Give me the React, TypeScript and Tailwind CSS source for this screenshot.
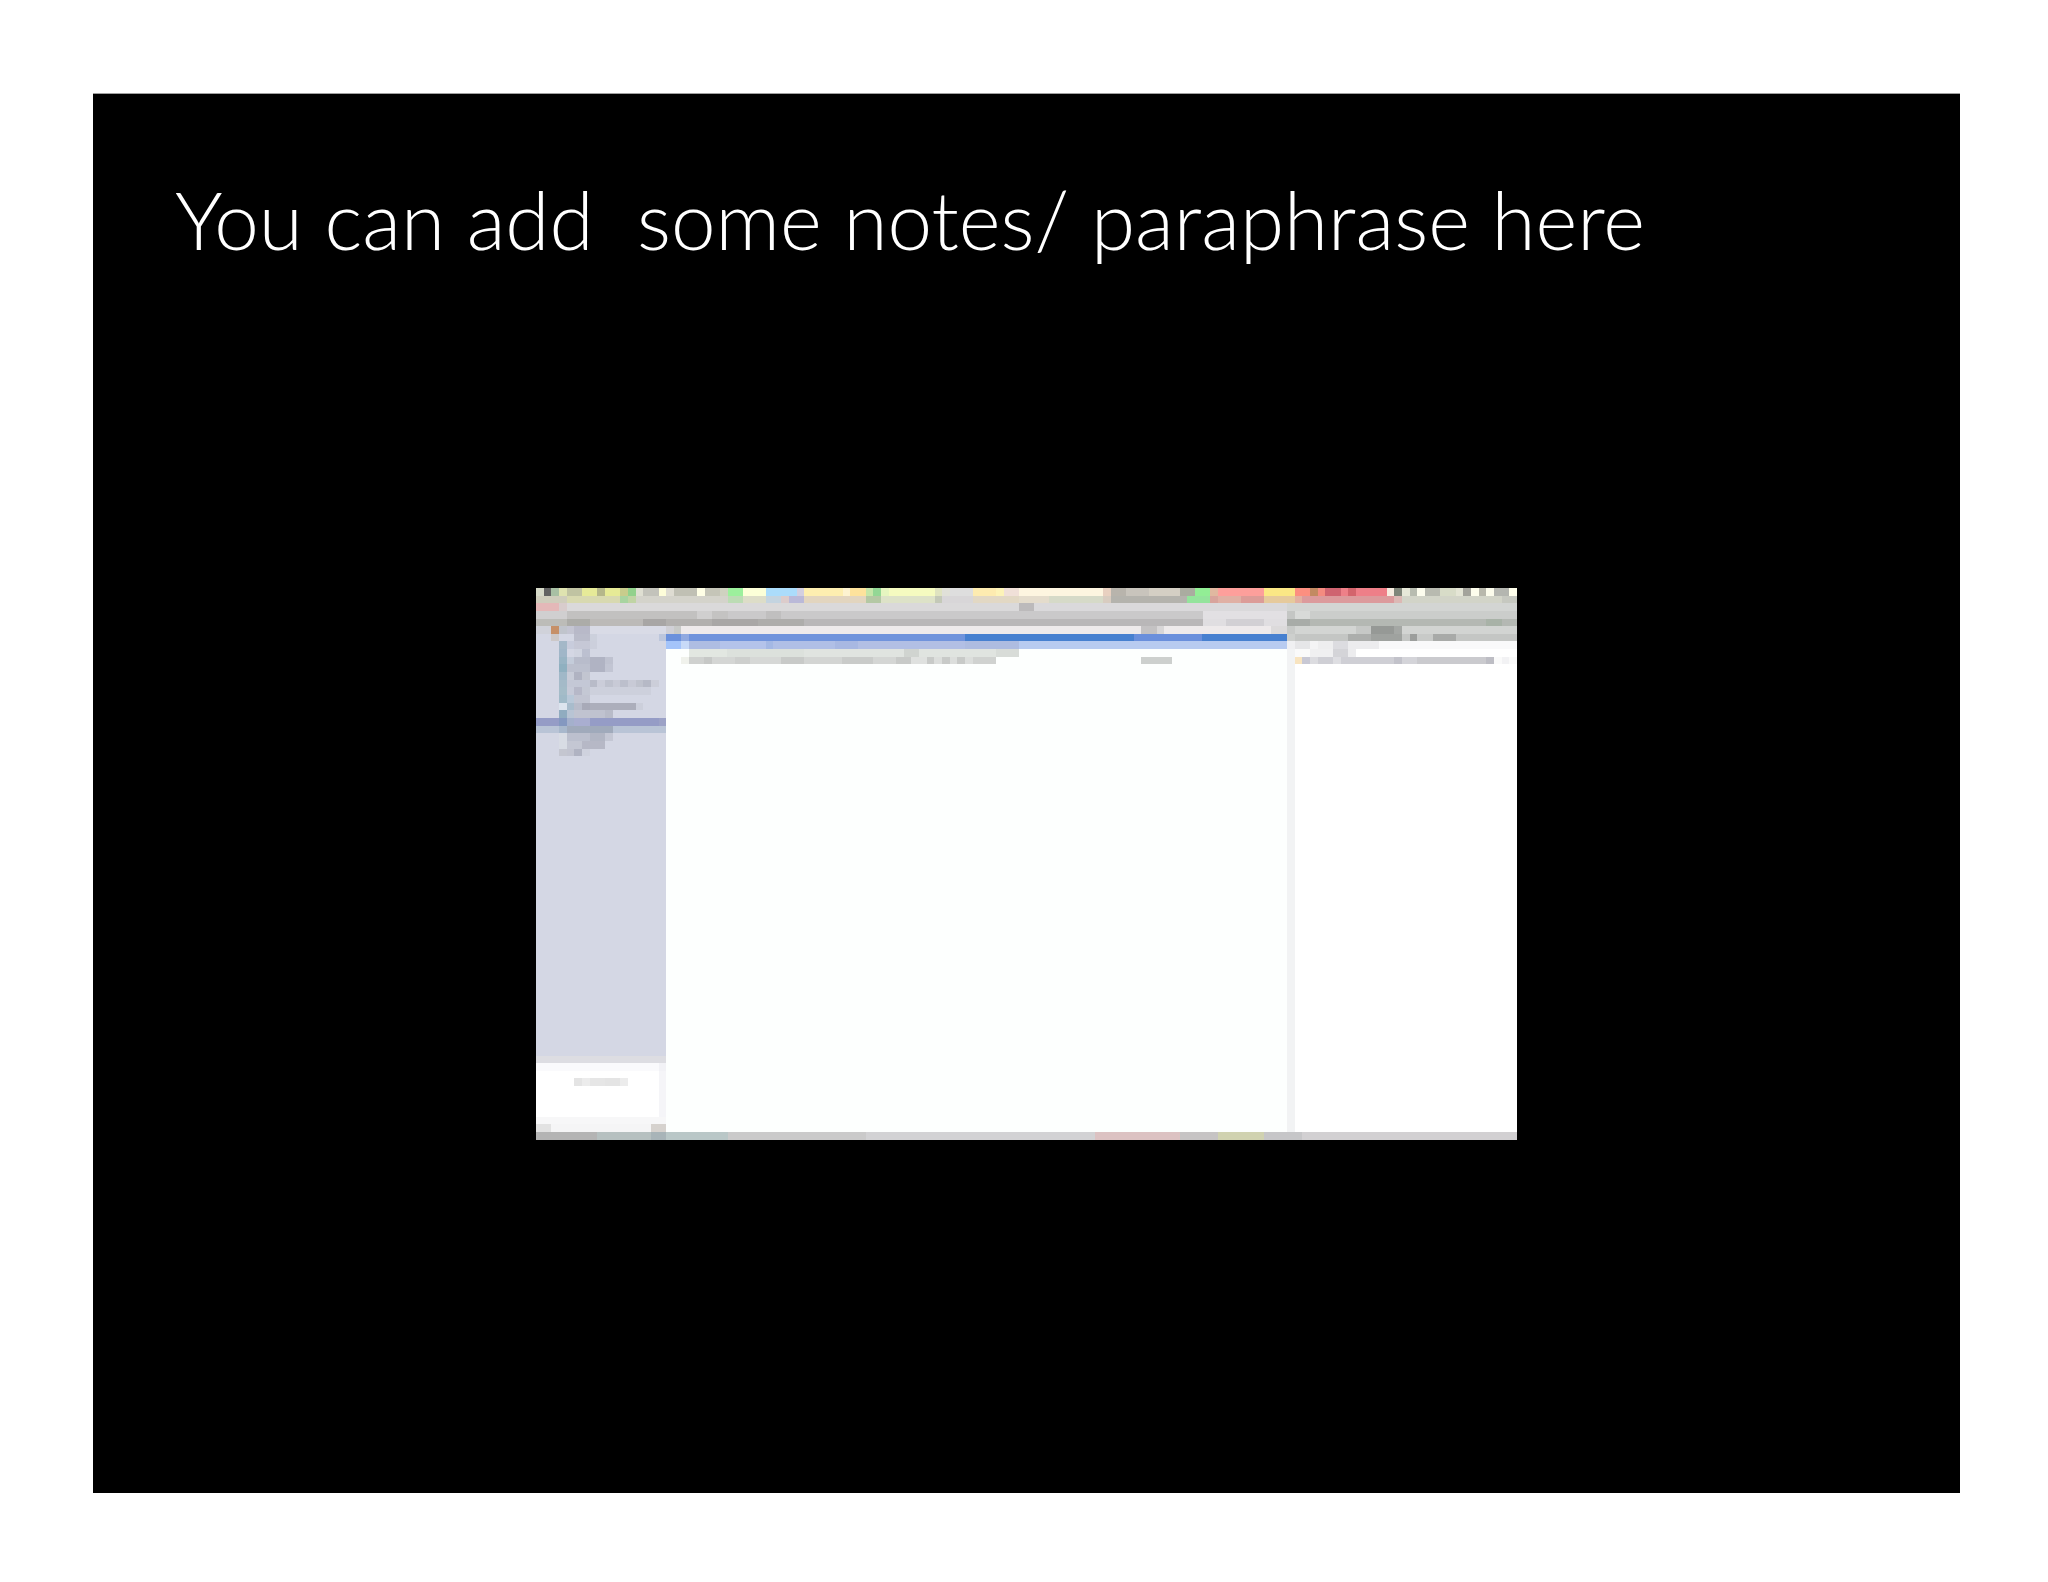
import React from 'react';

// A run is [number of cells, colour]. 'none' leaves the cells empty.
type Run = [number, string];

interface MosaicProps {
  cols: number;
  rows: Run[][];
  height: number;
  className?: string;
}

const Mosaic: React.FC<MosaicProps> = ({ cols, rows, height, className }) => (
  <svg
    viewBox={`0 0 ${cols} ${height}`}
    preserveAspectRatio="none"
    shapeRendering="crispEdges"
    aria-hidden="true"
    className={className ?? 'block h-full w-full'}
  >
    {rows.map((runs, y) => {
      let x = 0;
      return runs.map(([width, color], i) => {
        const start = x;
        x += width;
        return color === 'none' ? null : (
          <rect key={`${y}-${i}`} x={start} y={y} width={width} height={1} fill={color} />
        );
      });
    })}
  </svg>
);

const toolbar: Run[][] = [
  [
    [1, '#d6d9c8'], [1, '#626262'], [1, '#a8c0a4'], [1, '#dfe3b0'], [2, '#c0c3a2'], [2, '#e6ea98'], [1, '#b5b78a'],
    [2, '#e6ea96'], [1, '#c8cc8c'], [1, '#92d18c'], [1, '#dfdfd2'], [2, '#c3c3bb'], [1, '#fdfdd9'], [1, '#dedcd2'],
    [3, '#c0c0b4'], [1, '#ffffe6'], [2, '#c5c5b8'], [1, '#cfd2c0'], [2, '#9cf09c'], [3, '#fcffd8'], [4, '#abdcfb'],
    [1, '#d3cfe0'], [5, '#fdeeb0'], [1, '#fdf3d0'], [2, '#fde29c'], [1, '#c5e6a8'], [1, '#93d795'], [1, '#e6f5c0'],
    [6, '#f5fbc0'], [1, '#dfe3c0'], [1, '#e0e0d8'], [3, '#dedede'], [3, '#fdebb0'], [1, '#fdf3b8'], [2, '#f0e0d8'],
    [11, '#fdf5e0'], [1, '#e8d0c0'], [2, '#b8b4ac'], [3, '#c8c4bc'], [4, '#d4cfc4'], [2, '#aaaca0'], [2, '#92ee95'],
    [1, '#e0b8a0'], [6, '#fd9f9b'], [4, '#fbe785'], [2, '#fc8f80'], [1, '#c28a62'], [1, '#f48b80'], [2, '#cf6470'],
    [1, '#ee8088'], [1, '#d3646c'], [4, '#ee7f88'], [1, '#f6ece0'], [1, '#80867a'], [1, '#e6e8d8'], [1, '#b8bcb0'],
    [1, '#fdfdee'], [2, '#b8bab0'], [2, '#d8dcc8'], [1, '#e4e5d5'], [1, '#a3a39b'], [1, '#fdfdec'], [1, '#b8b8ac'],
    [1, '#fcfcec'], [2, '#b4b6b0'], [1, '#ffffec'],
  ],
  [
    [4, '#cfcdbc'], [7, '#d8d9b0'], [1, '#a8d4a0'], [1, '#c0d4a4'], [12, '#d4d3cb'], [2, '#bcdcb4'], [3, '#ddddc8'],
    [2, '#c4d4e0'], [1, '#dccccb'], [2, '#bab9d8'], [8, '#e2d5bf'], [2, '#b4c8a4'], [7, '#dde2c8'], [1, '#c4c9b8'],
    [4, '#d8d6d8'], [6, '#e2d8c4'], [4, '#e4dccc'], [7, '#d6dac8'], [1, '#d8ccc0'], [10, '#b4b3ad'], [3, '#94e49c'],
    [1, '#d8a49c'], [3, '#e0b0a4'], [3, '#dc9c98'], [4, '#e6ca9c'], [1, '#e4b0a0'], [12, '#dc9a9c'], [1, '#dcb8b4'],
    [13, '#d2d4c8'], [2, '#c6c8c0'], [1, '#d2d4c8'],
  ],
  [[3, '#e4b8b8'], [1, '#d8cccc'], [59, '#dad9da'], [2, '#bcbabb'], [33, '#dad9db'], [30, '#d3d5d3']],
  [
    [4, '#d0cfd0'], [17, '#c2c1c0'], [2, '#d0cfcf'], [2, '#c4c3c2'], [5, '#cac9ca'], [2, '#c0bfbf'], [55, '#cac9ca'],
    [11, '#e2e0e3'], [1, '#c4c6c4'], [2, '#d8dad8'], [27, '#cbcdcb'],
  ],
  [
    [4, '#bcbcb8'], [3, '#acaca8'], [7, '#bcbab8'], [3, '#a8a6a5'], [6, '#b2b0ae'], [6, '#a9a7a6'], [6, '#aeadab'],
    [52, '#b9b7b8'], [3, '#e0dee1'], [5, '#d2d0d4'], [3, '#e0dee1'], [3, '#a8aca8'], [23, '#b4b8b3'], [2, '#a8b2a7'],
    [2, '#b4b8b3'],
  ],
];

const folders: Run[][] = [
  [[2, '#d0d2da'], [1, '#c69068'], [1, '#c0c4cc'], [1, '#c4c5d2'], [2, '#b8b9c8'], [10, '#d9dbe6']],
  [[2, 'none'], [1, '#ccc8c8'], [2, 'none'], [2, '#babcca'], [1, '#ccd0dc'], [8, 'none'], [1, '#bcc6dc']],
  [[3, 'none'], [1, '#a4b8c8'], [1, '#c8ccdc'], [2, '#c6c8d6'], [1, '#cccfdc']],
  [[3, 'none'], [1, '#a0b6c8'], [1, 'none'], [1, '#d0d4e0'], [1, '#bcc0d0']],
  [[3, 'none'], [1, '#98b4c4'], [1, '#c4ccda'], [2, '#b8bccb'], [2, '#b0b3c3'], [1, '#bfc2d0']],
  [[3, 'none'], [1, '#8fb0c0'], [3, '#bcc0ce'], [2, '#b0b3c3'], [1, '#c2c5d3']],
  [[3, 'none'], [1, '#a0b8c8'], [1, '#c8ccd8'], [1, '#b0b3c2'], [1, '#c2c5d0']],
  [
    [3, 'none'], [1, '#a4bac8'], [3, '#c4c8d6'], [1, '#b8bbc8'], [1, '#cbcdd9'], [1, '#bfc2ce'], [1, '#c8cad6'],
    [1, '#bcbfcc'], [1, '#c8cad6'], [1, '#bfc2cd'], [1, '#b6b9c6'], [1, '#ccced9'],
  ],
  [[3, 'none'], [1, '#a4bcc8'], [1, '#c6cad8'], [1, '#b6b8c8'], [1, '#c4c8d4'], [8, '#cdd0dc']],
  [[3, 'none'], [1, '#a0bac8'], [1, '#b8c8d8'], [2, '#c2c5d2']],
  [[3, 'none'], [1, '#dce4ee'], [1, '#a8bccc'], [1, '#b8bcca'], [1, '#a8aab8'], [6, '#acaebb'], [1, '#cccfdb']],
  [[3, 'none'], [1, '#90acc0'], [1, '#b8c4d4'], [2, '#c0c3d0'], [2, '#bfc2cf'], [1, '#b8bbc8']],
  [[3, '#959cc6'], [1, '#8498c0'], [1, '#a4b0cc'], [2, '#a9aed0'], [9, '#959cc6'], [1, '#9ca2c6']],
  [[3, '#b9c4d6'], [1, '#a8b8cc'], [6, '#a0aabb'], [7, '#b9c4d6']],
  [[3, 'none'], [1, '#d8dce4'], [3, '#bcc0ce'], [2, '#b2b6c4'], [1, '#c4c7d4']],
  [[3, 'none'], [1, '#d8dce4'], [2, '#c4c7d3'], [3, '#b6b8c6']],
  [[3, 'none'], [1, '#c4c6d0'], [1, '#c2c4d0'], [1, '#b0b3c2'], [1, '#cfd2de']],
];

const preview: Run[][] = [
  [[16, '#fafafc'], [1, '#f2f2f6']],
  [[16, 'none'], [1, '#f5f5f8']],
  [[5, 'none'], [1, '#e4e4e4'], [1, '#ececec'], [2, '#e6e6e6'], [2, '#e4e4e4'], [1, '#ececec'], [4, 'none'], [1, '#f5f5f8']],
  [[16, 'none'], [1, '#f5f5f8']],
  [[16, 'none'], [1, '#f5f5f8']],
  [[16, 'none'], [1, '#f5f5f8']],
  [[16, 'none'], [1, '#f5f5f8']],
  [[17, '#f7f7f8']],
  [[2, '#e2e2e2'], [13, '#f5f5f6'], [2, '#d6d2ce']],
];

const messages: Run[][] = [
  [[1, '#d0d0d6'], [1, '#c8cac8'], [60, '#eeeaeb'], [2, '#c4c2c3'], [1, '#d8d6d7'], [14, '#eeeaeb'], [2, '#dcdadb']],
  [[2, '#6b91dc'], [1, '#90a9e0'], [36, '#7093dc'], [22, '#4780d0'], [9, '#6a8fdc'], [11, '#4780d0']],
  [
    [2, '#a4c4fa'], [1, '#c8daf8'], [4, '#aebde2'], [6, '#b4c3ea'], [1, '#a4b8e4'], [8, '#b0bfe6'], [3, '#a8b8e2'],
    [14, '#b2bfe4'], [7, '#aebce0'], [35, '#b8cbf0'],
  ],
  [[3, 'none'], [5, '#e2e7e1'], [10, '#dce1dc'], [13, '#e0e4e0'], [2, '#d0d4d0'], [10, '#e0e4e0'], [3, '#d8dcd8']],
  [
    [2, 'none'], [1, '#f0f2ec'], [2, '#cfd1cf'], [1, '#c6c8c6'], [3, '#d4d6d4'], [2, '#cdcfcd'], [4, '#d6d8d6'],
    [3, '#c8cac8'], [5, '#d3d5d3'], [4, '#c9cbc9'], [3, '#d4d6d4'], [2, '#c8cac8'], [2, '#dfe1df'], [1, '#c8cac8'],
    [1, '#dcdedc'], [1, '#c8cac8'], [1, '#dcdedc'], [1, '#c8cac8'], [1, '#dcdedc'], [3, '#d0d2d0'], [19, 'none'],
    [4, '#cdd0ce'],
  ],
];

const details: Run[][] = [
  [[1, '#c8cac8'], [8, '#d3d5d3'], [2, '#c6c8c6'], [3, '#969996'], [1, '#a4a7a4'], [15, '#d2d4d2']],
  [
    [1, '#cdcfcd'], [7, '#c4c6c4'], [3, '#acaeac'], [4, '#9fa29f'], [1, '#c4c6c4'], [1, '#9c9e9c'], [2, '#c8cac8'],
    [3, '#a8aaa8'], [8, '#c4c6c4'],
  ],
  [[1, '#f0f0f2'], [2, '#e6e6e8'], [1, '#f4f4f5'], [2, '#eeeeef'], [2, '#dcdce0'], [4, '#ececee'], [18, '#f9f9fa']],
  [[1, '#f2f3f4'], [2, '#fafafa'], [3, '#f0f0f1'], [2, '#d4d4d8'], [1, '#ececee']],
  [
    [1, '#f2f3f4'], [1, '#f8e4c0'], [1, '#c8c8d4'], [1, '#dcdce0'], [2, '#cfcfd5'], [1, '#dedee2'], [7, '#cfcfd5'],
    [1, '#c2c2ca'], [2, '#d4d4d9'], [9, '#cacace'], [1, '#bdbdc4'], [1, '#fafafa'], [1, '#f2f2f4'], [1, '#fafafa'],
  ],
];

const dock: Run[][] = [
  [
    [8, '#b4b4b4'], [7, '#b6c0c0'], [2, '#a8b4b8'], [8, '#b9c7c7'], [18, '#cacaca'], [30, '#d2d2d4'], [11, '#dcc2c2'],
    [5, '#c6c4c4'], [6, '#d0d2b0'], [5, '#c6c6c8'], [28, '#d2d0d2'],
  ],
];

const Thumbnail: React.FC = () => (
  <figure
    aria-label="Reference manager window"
    className="mx-auto grid aspect-video w-[981px] max-w-full grid-rows-[5fr_66fr_1fr] bg-white"
  >
    <Mosaic cols={128} height={5} rows={toolbar} className="block h-full min-h-0 w-full" />
    <div className="grid min-h-0 grid-cols-[17fr_81fr_30fr]">
      <aside className="grid min-h-0 min-w-0 grid-rows-[56fr_1fr_9fr] bg-[#d4d7e4]">
        <Mosaic cols={17} height={56} rows={folders} className="block h-full min-h-0 w-full" />
        <div className="bg-[#dddde2]" />
        <div className="min-h-0 bg-white">
          <Mosaic cols={17} height={9} rows={preview} />
        </div>
      </aside>
      <main className="min-h-0 min-w-0 bg-[#fdfffe]">
        <Mosaic cols={81} height={66} rows={messages} />
      </main>
      <section className="min-h-0 min-w-0 border-l-8 border-[#f2f3f4] bg-white">
        <Mosaic cols={30} height={66} rows={details} className="-ml-2 block h-full w-[calc(100%+8px)] max-w-none" />
      </section>
    </div>
    <Mosaic cols={128} height={1} rows={dock} className="block h-full min-h-0 w-full" />
  </figure>
);

const App: React.FC = () => {
  return (
    <div className="min-h-screen bg-white pt-[93px] pr-[88px] pl-[93px]">
      <article className="aspect-[4/3] w-full border-t border-[#a0a0a0] bg-black">
        <h1 className="h-[494px] pt-[77px] pl-[82px] font-['Lato',sans-serif] text-[80px] leading-[96px] font-light whitespace-pre text-white">
          You can add  some notes/ paraphrase here
        </h1>
        <Thumbnail />
      </article>
    </div>
  );
};

export default App;
